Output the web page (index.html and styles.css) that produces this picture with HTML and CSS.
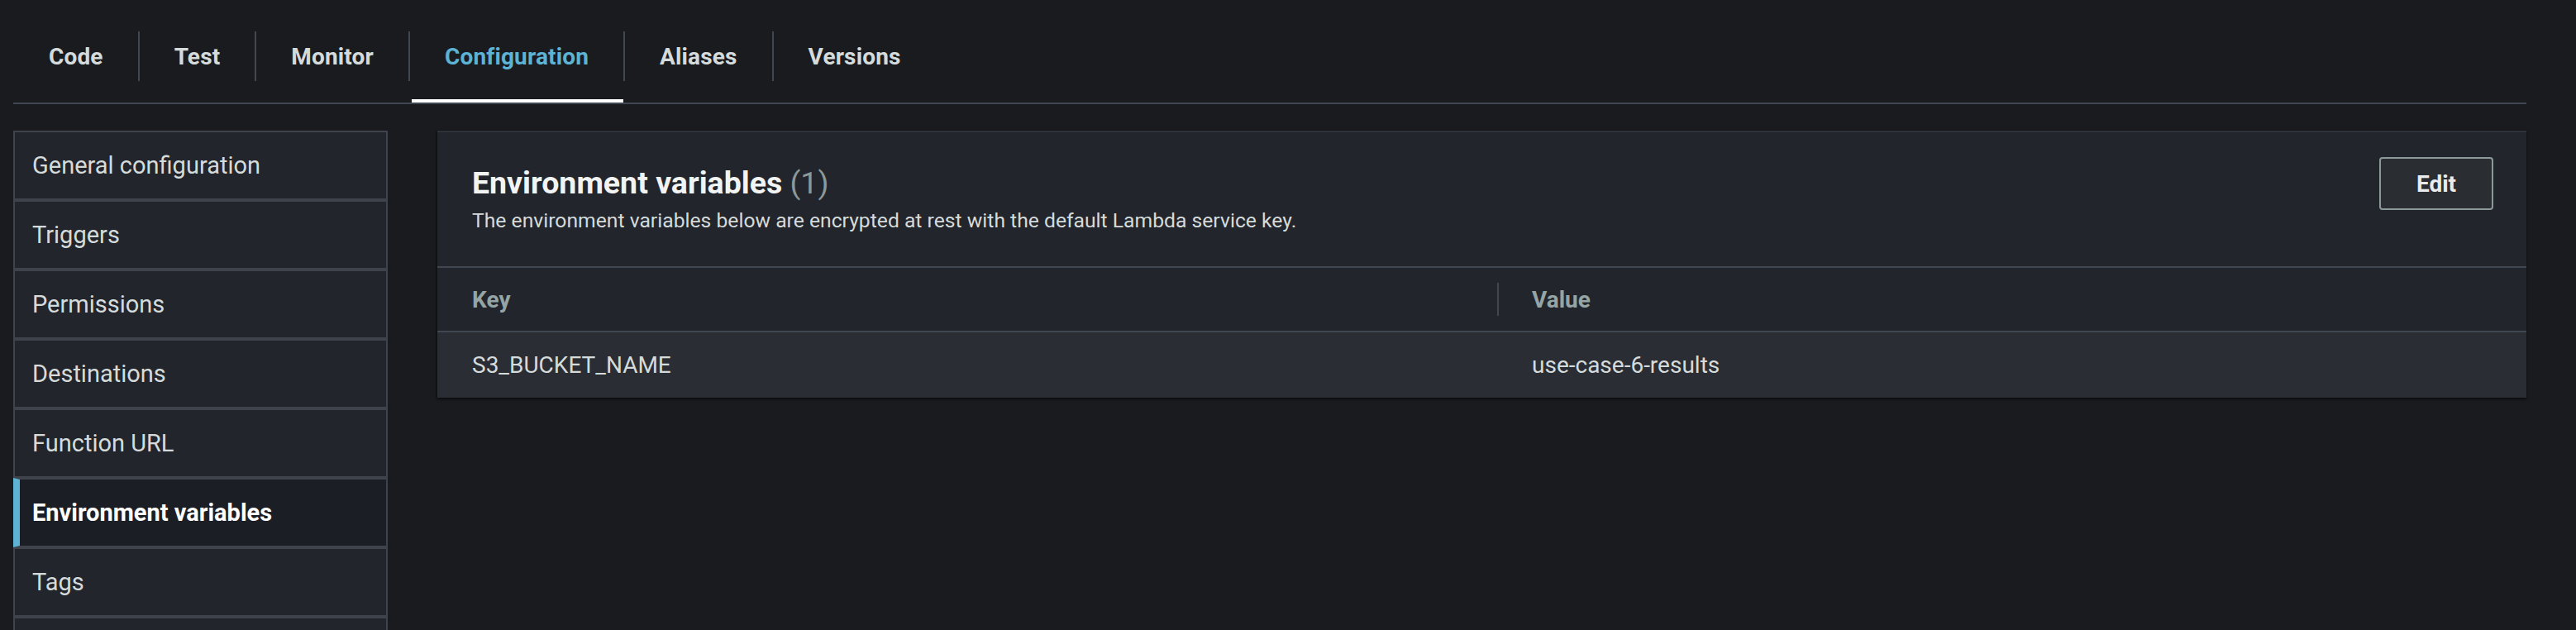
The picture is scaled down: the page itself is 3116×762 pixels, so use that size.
FILE: index.html
```html
<!DOCTYPE html>
<html lang="en">
<head>
<meta charset="utf-8">
<title>Lambda configuration</title>
<link rel="stylesheet" href="styles.css">
</head>
<body>
<div class="page">
  <nav class="tabs">
    <div class="tab first"><span class="tab-label">Code</span></div>
    <div class="tab"><span class="tab-label">Test</span></div>
    <div class="tab"><span class="tab-label">Monitor</span></div>
    <div class="tab active"><span class="tab-label">Configuration</span></div>
    <div class="tab"><span class="tab-label">Aliases</span></div>
    <div class="tab"><span class="tab-label">Versions</span></div>
  </nav>
  <div class="content">
    <aside class="side-nav">
      <div class="side-item">General configuration</div>
      <div class="side-item">Triggers</div>
      <div class="side-item">Permissions</div>
      <div class="side-item">Destinations</div>
      <div class="side-item">Function URL</div>
      <div class="side-item active">Environment variables</div>
      <div class="side-item">Tags</div>
      <div class="side-item"></div>
    </aside>
    <section class="panel">
      <header class="panel-header">
        <div class="title-block">
          <h2 class="title">Environment variables <span class="count">(1)</span></h2>
          <p class="desc">The environment variables below are encrypted at rest with the default Lambda service key.</p>
        </div>
        <button class="btn">Edit</button>
      </header>
      <div class="table">
        <div class="row head">
          <div class="cell key">Key</div>
          <div class="cell val"><span class="divider"></span><span>Value</span></div>
        </div>
        <div class="row body">
          <div class="cell key">S3_BUCKET_NAME</div>
          <div class="cell val"><span class="spacer"></span><span>use-case-6-results</span></div>
        </div>
      </div>
    </section>
  </div>
</div>
</body>
</html>
```

FILE: styles.css
```css
* { box-sizing: border-box; }
html, body {
  margin: 0;
  padding: 0;
  background: #1a1b1f;
  overflow: hidden;
}
body {
  font-family: Roboto, "Liberation Sans", sans-serif;
  color: #d5dbdb;
  width: 3116px;
  height: 762px;
}
.page {
  padding: 0 60px 0 16px;
}

/* Tabs */
.tabs {
  display: flex;
  padding-top: 38px;
  border-bottom: 2px solid #414750;
}
.tab {
  position: relative;
  padding-bottom: 26px;
}
.tab-label {
  display: flex;
  align-items: center;
  height: 60px;
  padding: 0 42px;
  border-left: 2px solid #414750;
  font-size: 28px;
  letter-spacing: 0.15px;
  font-weight: 700;
  color: #d5dbdb;
}
.tab.first .tab-label {
  border-left: none;
  padding-left: 43px;
}
.tab.active .tab-label {
  color: #5db3d4;
}
.tab.active::after {
  content: "";
  position: absolute;
  left: 4px;
  right: 0;
  bottom: 0;
  height: 4px;
  background: #ffffff;
}

/* Content */
.content {
  display: flex;
  gap: 60px;
  margin-top: 32px;
  align-items: flex-start;
}
.side-nav {
  width: 453px;
  flex: none;
  display: flex;
  flex-direction: column;
}
.side-item {
  height: 84px;
  display: flex;
  align-items: center;
  padding-left: 21px;
  background: #22252c;
  border: 2px solid #3f444c;
  font-size: 29px;
  color: #d5dbdb;
}
.side-item.active {
  background: #1b1e24;
  border-left: 8px solid #5db3d4;
  padding-left: 15px;
  font-weight: 700;
  color: #ffffff;
}

/* Panel */
.panel {
  flex: 1;
  background: #22252b;
  border-top: 2px solid #2e3239;
  box-shadow: 0 2px 3px rgba(0, 0, 0, 0.55), -1px 0 2px rgba(0, 0, 0, 0.4);
}
.panel-header {
  display: flex;
  justify-content: space-between;
  align-items: flex-start;
  padding: 30px 40px 39px 42px;
  border-bottom: 2px solid #414750;
}
.title-block {
  padding-top: 9px;
}
.title {
  margin: 0;
  font-size: 37.5px;
  line-height: 44px;
  font-weight: 700;
  color: #f2f3f3;
}
.count {
  font-weight: 400;
  color: #8d9999;
}
.desc {
  margin: 8px 0 0;
  font-size: 24.7px;
  line-height: 32px;
  color: #d5dbdb;
}
.btn {
  height: 64px;
  width: 138px;
  background: #2a2e33;
  border: 2px solid #8d9999;
  border-radius: 4px;
  font-family: inherit;
  font-size: 28px;
  font-weight: 700;
  color: #e9ebed;
  padding: 0;
}

/* Table */
.row {
  display: grid;
  grid-template-columns: 1282px 1fr;
}
.row.head {
  height: 78px;
  border-bottom: 2px solid #414750;
  background: #22252b;
}
.row.body {
  height: 79px;
  background: #2a2d33;
}
.cell {
  display: flex;
  align-items: center;
  font-size: 28px;
}
.cell.key {
  padding-left: 42px;
}
.row.head .cell {
  font-weight: 700;
  color: #95a5a6;
}
.row.body .cell {
  color: #d5dbdb;
}
.divider {
  width: 2px;
  height: 40px;
  background: #414750;
  margin-right: 40px;
}
.spacer {
  width: 2px;
  margin-right: 40px;
}
```
